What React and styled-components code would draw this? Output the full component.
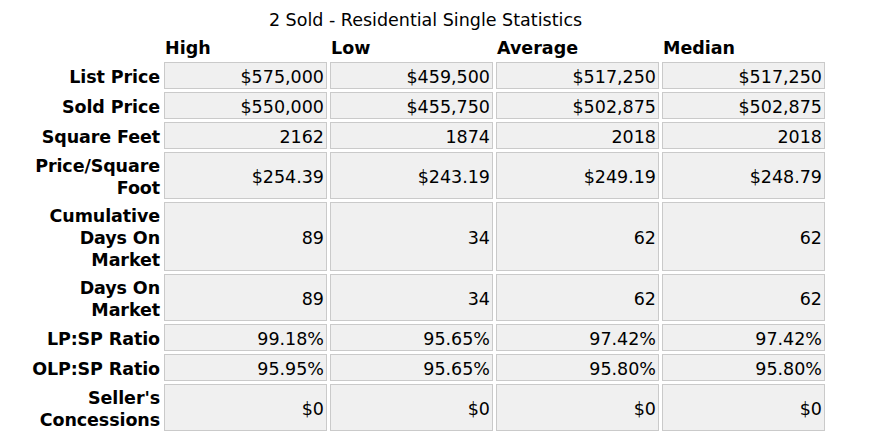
import React from "react";
import styled, { createGlobalStyle } from "styled-components";

const Global = createGlobalStyle`
  html, body { margin: 0; padding: 0; background: #ffffff; }
  body {
    font-family: "DejaVu Sans", Verdana, sans-serif;
    font-size: 17.5px;
    color: #000000;
  }
`;

const Page = styled.div`
  padding: 9px 0 0 23px;
`;

const Table = styled.table`
  border-collapse: separate;
  border-spacing: 3px;
  table-layout: fixed;
  width: 805px;
`;

const Col = styled.col`
  width: ${(p) => p.$w}px;
`;

const Caption = styled.caption`
  caption-side: top;
  text-align: center;
  font-weight: normal;
  line-height: 22px;
  white-space: nowrap;
`;

const HeadCell = styled.th`
  box-sizing: border-box;
  padding: 3px 1px 0;
  line-height: 22px;
  text-align: left;
  font-weight: bold;
  vertical-align: bottom;
`;

const LabelCell = styled.th`
  box-sizing: border-box;
  padding: 3px 1px 0;
  line-height: 22px;
  text-align: right;
  font-weight: bold;
  vertical-align: middle;
  letter-spacing: -0.1px;
`;

const ValueCell = styled.td`
  box-sizing: border-box;
  padding: 4px 2px 0;
  line-height: 21px;
  text-align: right;
  vertical-align: middle;
  background: #f0f0f0;
  border: 1px solid #cacaca;
  white-space: nowrap;
`;

const headers = ["High", "Low", "Average", "Median"];

const rows = [
  ["List Price", "$575,000", "$459,500", "$517,250", "$517,250"],
  ["Sold Price", "$550,000", "$455,750", "$502,875", "$502,875"],
  ["Square Feet", "2162", "1874", "2018", "2018"],
  ["Price/Square Foot", "$254.39", "$243.19", "$249.19", "$248.79"],
  ["Cumulative Days On Market", "89", "34", "62", "62"],
  ["Days On Market", "89", "34", "62", "62"],
  ["LP:SP Ratio", "99.18%", "95.65%", "97.42%", "97.42%"],
  ["OLP:SP Ratio", "95.95%", "95.65%", "95.80%", "95.80%"],
  ["Seller's Concessions", "$0", "$0", "$0", "$0"],
];

export default function App() {
  return (
    <>
      <Global />
      <Page>
        <Table>
          <Caption>2 Sold - Residential Single Statistics</Caption>
          <colgroup>
            <Col $w={135} />
            <Col $w={163} />
            <Col $w={163} />
            <Col $w={163} />
            <Col $w={163} />
          </colgroup>
          <thead>
            <tr>
              <HeadCell />
              {headers.map((h) => (
                <HeadCell key={h}>{h}</HeadCell>
              ))}
            </tr>
          </thead>
          <tbody>
            {rows.map(([label, ...vals]) => (
              <tr key={label}>
                <LabelCell>{label}</LabelCell>
                {vals.map((v, i) => (
                  <ValueCell key={i}>{v}</ValueCell>
                ))}
              </tr>
            ))}
          </tbody>
        </Table>
      </Page>
    </>
  );
}
